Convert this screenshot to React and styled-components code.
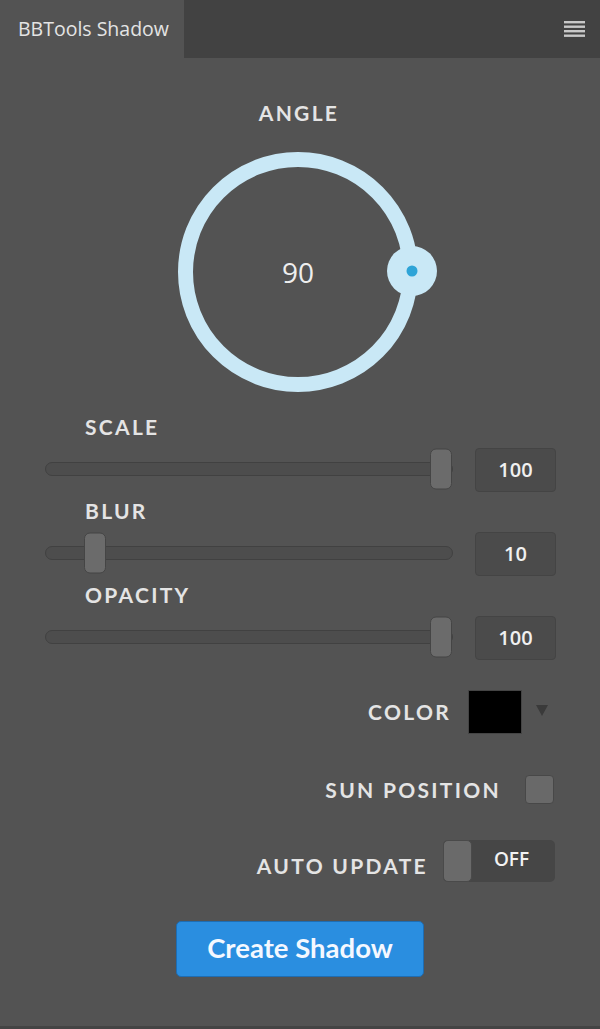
import React from "react";
import styled, { createGlobalStyle } from "styled-components";

const Global = createGlobalStyle`
  html, body { margin: 0; padding: 0; background: #535353; }
  body { font-family: "Lato", "Open Sans", sans-serif; }
`;

const Panel = styled.div`
  width: 600px;
  height: 1029px;
  background: #535353;
  display: flex;
  flex-direction: column;
  box-sizing: border-box;
  border-bottom: 3px solid #444;
  overflow: hidden;
`;

const TabBar = styled.div`
  height: 58px;
  display: flex;
  background: #424242;
  flex-shrink: 0;
`;

const Tab = styled.div`
  width: 184px;
  background: #535353;
  display: flex;
  align-items: center;
  padding-left: 18px;
  box-sizing: border-box;
  font-family: "Open Sans", sans-serif;
  font-size: 19.5px;
  color: #e4e4e4;
  padding-bottom: 2px;
`;

const TabSpacer = styled.div`
  flex: 1;
  display: flex;
  justify-content: flex-end;
  align-items: flex-start;
  padding: 21px 15px 0 0;
`;

const Content = styled.div`
  display: flex;
  flex-direction: column;
  align-items: stretch;
`;

const Label = styled.div`
  font-family: "Lato", sans-serif;
  font-weight: 700;
  font-size: 21px;
  line-height: 24px;
  letter-spacing: 2.3px;
  color: #e4e4e4;
`;

const AngleLabel = styled(Label)`
  text-align: center;
  margin-top: 43px;
  padding-right: 2px;
`;

const Dial = styled.div`
  align-self: center;
  display: grid;
  width: 280px;
  height: 250px;
  margin-top: 22px;
  & > * { grid-area: 1 / 1; }
`;

const DialValue = styled.div`
  align-self: center;
  justify-self: center;
  margin-right: 4px;
  font-family: "Open Sans", sans-serif;
  font-size: 28px;
  color: #eeeeee;
`;

const Sliders = styled.div`
  display: flex;
  flex-direction: column;
  margin-top: 18px;
`;

const SliderBlock = styled.div`
  display: flex;
  flex-direction: column;
  gap: 8px;
  margin-bottom: 8px;
`;

const SliderLabel = styled(Label)`
  padding-left: 85px;
`;

const SliderRow = styled.div`
  display: flex;
  align-items: center;
  padding-left: 45px;
  gap: 22px;
  height: 44px;
`;

const Track = styled.div`
  position: relative;
  width: 408px;
  height: 14px;
  box-sizing: border-box;
  background: #4d4d4d;
  border: 1px solid #414141;
  border-radius: 7px;
`;

const Thumb = styled.div`
  position: absolute;
  top: 50%;
  width: 22px;
  height: 41px;
  box-sizing: border-box;
  transform: translate(-50%, -50%);
  background: #6b6b6b;
  border: 1px solid #454545;
  border-radius: 6px;
`;

const ValueBox = styled.div`
  width: 81px;
  height: 44px;
  box-sizing: border-box;
  background: #4b4b4b;
  border: 1px solid #444;
  border-radius: 4px;
  display: flex;
  align-items: center;
  justify-content: center;
  font-family: "Open Sans", sans-serif;
  font-weight: 600;
  font-size: 20px;
  color: #f0f0f0;
  margin-top: 2px;
  padding-bottom: 2px;
`;

const OptionRow = styled.div`
  display: flex;
  justify-content: flex-end;
  align-items: center;
  height: 44px;
  padding-right: ${(p) => p.$pr || 45}px;
  margin-top: ${(p) => p.$mt}px;
  gap: ${(p) => p.$gap}px;
`;

const OptionLabel = styled(Label)`
  padding-top: ${(p) => p.$shift || 0}px;
`;

const Swatch = styled.div`
  width: 54px;
  height: 44px;
  box-sizing: border-box;
  background: #000;
  border: 1px solid #444;
`;

const Arrow = styled.div`
  width: 0;
  height: 0;
  border-left: 6px solid transparent;
  border-right: 6px solid transparent;
  border-top: 11px solid #3a3a3a;
  margin-left: -3px;
  margin-bottom: 4px;
`;

const Checkbox = styled.div`
  width: 29px;
  height: 29px;
  box-sizing: border-box;
  background: #696969;
  border: 1px solid #484848;
  border-radius: 4px;
`;

const Toggle = styled.div`
  width: 112px;
  height: 42px;
  box-sizing: border-box;
  background: #464646;
  border-radius: 5px;
  display: flex;
  align-items: center;
`;

const Knob = styled.div`
  width: 29px;
  height: 42px;
  box-sizing: border-box;
  background: #6a6a6a;
  border: 1px solid #4a4a4a;
  border-radius: 5px;
`;

const ToggleText = styled.div`
  flex: 1;
  text-align: center;
  font-family: "Open Sans", sans-serif;
  font-weight: 600;
  font-size: 19px;
  color: #f2f2f2;
  padding-bottom: 4px;
  padding-right: 4px;
`;

const Button = styled.button`
  align-self: center;
  margin-top: 38px;
  width: 248px;
  height: 56px;
  background: #2a8ee0;
  border: 1px solid #1e6db3;
  border-radius: 5px;
  font-family: "Lato", sans-serif;
  font-weight: 700;
  font-size: 27.5px;
  color: #f4f8ff;
  padding: 0 0 4px;
  cursor: pointer;
`;

const MenuIcon = () => (
  <svg width="21" height="16" viewBox="0 0 21 16">
    {[0, 4.5, 9, 13.5].map((y) => (
      <rect key={y} x="0" y={y} width="21" height="2.4" fill="#c8c8c8" />
    ))}
  </svg>
);

const DialSvg = () => (
  <svg width="280" height="250" viewBox="0 0 280 250">
    <circle cx="138" cy="125" r="112.5" fill="none" stroke="#c9e8f6" strokeWidth="15" />
    <circle cx="252" cy="124" r="25" fill="#c9e8f6" />
    <circle cx="252" cy="124" r="5.5" fill="#2ea4d7" />
  </svg>
);

const sliders = [
  { name: "SCALE", value: 100, pos: 97.3 },
  { name: "BLUR", value: 10, pos: 12 },
  { name: "OPACITY", value: 100, pos: 97.3 },
];

export default function App() {
  return (
    <>
      <Global />
      <Panel>
        <TabBar>
          <Tab>BBTools Shadow</Tab>
          <TabSpacer>
            <MenuIcon />
          </TabSpacer>
        </TabBar>
        <Content>
          <AngleLabel>ANGLE</AngleLabel>
          <Dial>
            <DialSvg />
            <DialValue>90</DialValue>
          </Dial>
          <Sliders>
            {sliders.map((s) => (
              <SliderBlock key={s.name}>
                <SliderLabel>{s.name}</SliderLabel>
                <SliderRow>
                  <Track>
                    <Thumb style={{ left: `${s.pos}%` }} />
                  </Track>
                  <ValueBox>{s.value}</ValueBox>
                </SliderRow>
              </SliderBlock>
            ))}
          </Sliders>
          <OptionRow $mt={23} $gap={17} $pr={52}>
            <OptionLabel>COLOR</OptionLabel>
            <Swatch />
            <Arrow />
          </OptionRow>
          <OptionRow $mt={33} $gap={24} $pr={46}>
            <OptionLabel $shift={2}>SUN POSITION</OptionLabel>
            <Checkbox />
          </OptionRow>
          <OptionRow $mt={28} $gap={15} $pr={45}>
            <OptionLabel $shift={9}>AUTO UPDATE</OptionLabel>
            <Toggle>
              <Knob />
              <ToggleText>OFF</ToggleText>
            </Toggle>
          </OptionRow>
          <Button>Create Shadow</Button>
        </Content>
      </Panel>
    </>
  );
}
